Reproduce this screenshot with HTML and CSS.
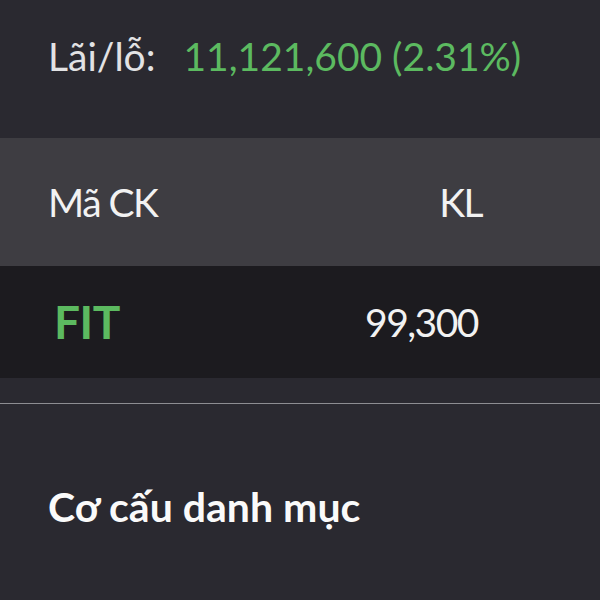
FILE: index.html
```html
<!DOCTYPE html>
<html lang="vi">

<head>
    <meta charset="utf-8" />
    <meta name="viewport" content="width=device-width, initial-scale=1.0" />
    <title>Danh mục</title>
    <link rel="stylesheet" href="styles.css">
</head>

<body>
    <div class="summary">
        <span class="label">Lãi/lỗ:</span>
        <span class="profit">11,121,600 (2.31%)</span>
    </div>

    <div class="table-head">
        <span>Mã CK</span>
        <span class="col-kl">KL</span>
    </div>

    <div class="table-row">
        <span class="symbol">FIT</span>
        <span class="col-kl">99,300</span>
    </div>

    <div class="spacer"></div>

    <h2 class="section-title">Cơ cấu danh mục</h2>
</body>

</html>
```

FILE: styles.css
```css
html {
    font-family: Lato, "Noto Sans", sans-serif;
    color: #f2f2f2;
    background: #2a2930;
}

body {
    margin: 0;
    width: 600px;
    height: 600px;
    overflow: hidden;
    background: #2a2930;
}

.summary {
    display: flex;
    align-items: baseline;
    height: 138px;
    box-sizing: border-box;
    padding: 33px 0 0 48px;
    font-size: 39px;
    line-height: 1.2;
}

.label {
    color: #e2e2e4;
}

.profit {
    color: #5cba60;
    margin-left: 28px;
}

.table-head,
.table-row {
    display: grid;
    grid-template-columns: 1fr auto;
    align-items: center;
    padding: 0 118px 0 48px;
    font-size: 39px;
    line-height: 1.2;
    letter-spacing: -1.5px;
}

.table-head {
    height: 128px;
    background: #3e3d42;
}

.table-row {
    height: 112px;
    background: #1c1b1f;
    padding-right: 122px;
}

.col-kl {
    text-align: right;
}

.symbol {
    color: #5cba60;
    font-weight: bold;
    font-size: 46px;
    letter-spacing: -0.5px;
    padding-left: 6px;
}

.spacer {
    height: 25px;
    border-bottom: 1px solid #8d8d92;
}

.section-title {
    margin: 0;
    padding: 78px 0 0 48px;
    font-size: 41px;
    font-weight: bold;
    line-height: 1.2;
    color: #fafafa;
}
```
